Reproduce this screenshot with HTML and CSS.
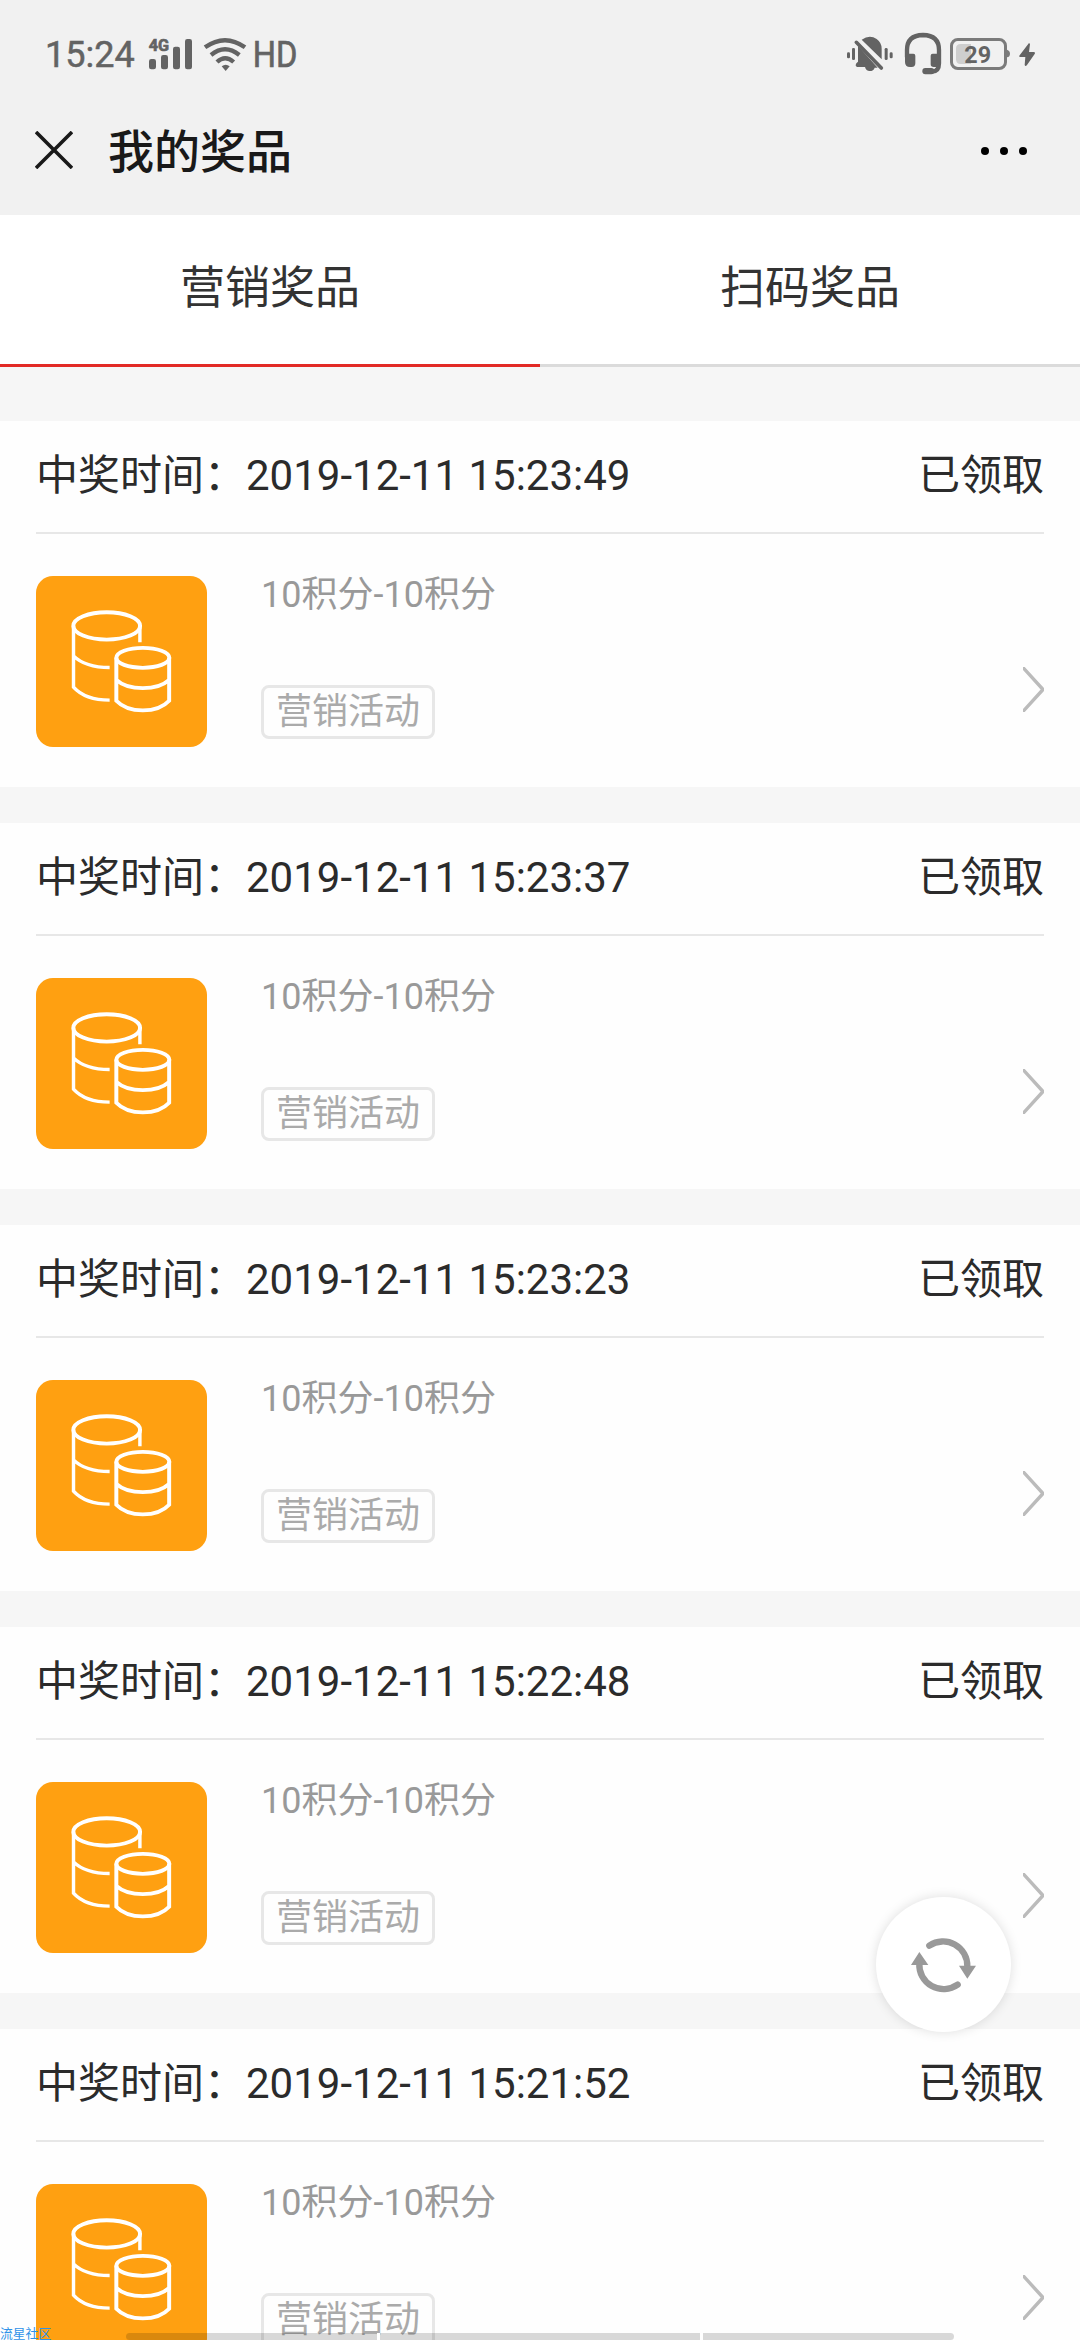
FILE: index.html
```html
<!DOCTYPE html>
<html lang="zh-CN">
<head>
<meta charset="utf-8">
<title>我的奖品</title>
<link rel="stylesheet" href="styles.css">
</head>
<body>
<svg width="0" height="0" class="defs" aria-hidden="true">
  <symbol id="coins" viewBox="105 108 497 514" preserveAspectRatio="none">
    <g fill="none" stroke="#fff" stroke-width="11.500">
      <ellipse cx="310.5" cy="258" rx="97" ry="41"/>
      <path d="M214 258V442Q248 481 319 481M407 258V307M214 348Q248 383 319 383" stroke-width="10"/>
      <ellipse cx="415.500" cy="354" rx="77" ry="30"/>
      <path d="M338.500 354V483Q365 512 415.500 512T492 483V354M338.500 420Q365 445 415.500 445T492 420"/>
    </g>
  </symbol>
  <symbol id="chevron" viewBox="0 0 21 45">
    <path d="M-1 -.5L20 22.500L-1 45.500" fill="none" stroke="#bbb" stroke-width="3.400"/>
  </symbol>
</svg>
<div class="screen">
  <header class="top">
    <div class="status">
      <span class="time">15:24</span>
      <svg class="signal" viewBox="441 90 138 138">
        <text x="446" y="153" textLength="61" lengthAdjust="spacingAndGlyphs" class="net">4G</text>
        <g fill="#636363"><rect x="447" y="177" width="21" height="31" rx="7"/><rect x="483" y="165" width="21" height="43" rx="7"/><rect x="519" y="140" width="21" height="68" rx="7"/><rect x="555" y="117" width="21" height="91" rx="7"/></g>
      </svg>
      <svg class="wifi" viewBox="609 90 132 138">
        <g fill="none" stroke="#636363" stroke-width="13"><path d="M615 142Q675 99 735 142"/><path d="M633 165Q675 131 718 165"/><path d="M651 186Q675 163 701 186"/></g>
        <path d="M665 199Q677 190 689 199L677 213Z" fill="#636363"/>
      </svg>
      <svg class="hd" viewBox="753 90 144 138"><text x="758" y="201" textLength="134" lengthAdjust="spacingAndGlyphs" class="hd-text">HD</text></svg>
      <span class="grow"></span>
      <svg class="bell" viewBox="138 90 144 138">
        <g fill="#636363">
          <path d="M185 119Q209 103 230 117Q245 128 245 146V178ZM174 137L233 203H224Q221 213 209 213Q198 213 195 201H172Q164 200 169 190L174 185Z"/>
          <rect x="141" y="157" width="9" height="18" rx="4"/><rect x="156" y="144" width="9" height="36" rx="4"/><rect x="254" y="144" width="9" height="36" rx="4"/><rect x="269" y="157" width="9" height="18" rx="4"/>
        </g>
        <path d="M169 127L244 204" stroke="#636363" stroke-width="11" stroke-linecap="round"/>
      </svg>
      <svg class="headset" viewBox="309 90 120 138">
        <path d="M321 172V150Q321 106 369 105Q417 106 417 150V190Q417 214 397 215H374" fill="none" stroke="#636363" stroke-width="13"/>
        <g fill="#636363"><path d="M315 161H340Q346 161 346 167V190Q346 201 335 201H330Q315 201 315 186ZM423 161H398Q392 161 392 167V193Q392 201 401 201H408Q423 201 423 186Z"/><rect x="367" y="204" width="36" height="19" rx="9"/></g>
      </svg>
      <svg class="battery" viewBox="447 90 186 138">
        <path d="M487 132H513V192H482Q468 192 468 178V146Q468 132 482 132Z" fill="#cecece"/>
        <rect x="454.500" y="118.500" width="162" height="87" rx="19" fill="none" stroke="#7b7b7b" stroke-width="9"/>
        <path d="M621 149Q630 152 630 161Q630 170 621 172Z" fill="#7b7b7b"/>
        <text x="533" y="188" text-anchor="middle" class="level">29</text>
      </svg>
      <svg class="bolt" viewBox="654 90 54 138"><path d="M687 129L659 166Q655 171 661 171H676L674 195Q676 201 681 195L704 162Q707 156 701 156H687L690 132Z" fill="#636363"/></svg>
    </div>
    <div class="nav">
      <svg class="close" viewBox="0 0 38 38"><path d="M1 1L37 37M37 1L1 37" stroke="#191919" stroke-width="3.600"/></svg>
      <h1 class="title">我的奖品</h1>
      <svg class="more" viewBox="0 0 46 8"><circle cx="4" cy="4" r="4"/><circle cx="23" cy="4" r="4"/><circle cx="42" cy="4" r="4"/></svg>
    </div>
  </header>
  <nav class="tabs">
    <a class="tab tab-active">营销奖品</a>
    <a class="tab">扫码奖品</a>
  </nav>
  <main class="list">
    <section class="card">
      <div class="card-head"><span>中奖时间：2019-12-11 15:23:49</span><span>已领取</span></div>
      <div class="card-body">
        <svg class="prize"><use href="#coins"/></svg>
        <div class="info"><span class="name">10积分-10积分</span><span class="tag">营销活动</span></div>
        <svg class="chevron"><use href="#chevron"/></svg>
      </div>
    </section>
    <section class="card">
      <div class="card-head"><span>中奖时间：2019-12-11 15:23:37</span><span>已领取</span></div>
      <div class="card-body">
        <svg class="prize"><use href="#coins"/></svg>
        <div class="info"><span class="name">10积分-10积分</span><span class="tag">营销活动</span></div>
        <svg class="chevron"><use href="#chevron"/></svg>
      </div>
    </section>
    <section class="card">
      <div class="card-head"><span>中奖时间：2019-12-11 15:23:23</span><span>已领取</span></div>
      <div class="card-body">
        <svg class="prize"><use href="#coins"/></svg>
        <div class="info"><span class="name">10积分-10积分</span><span class="tag">营销活动</span></div>
        <svg class="chevron"><use href="#chevron"/></svg>
      </div>
    </section>
    <section class="card">
      <div class="card-head"><span>中奖时间：2019-12-11 15:22:48</span><span>已领取</span></div>
      <div class="card-body">
        <svg class="prize"><use href="#coins"/></svg>
        <div class="info"><span class="name">10积分-10积分</span><span class="tag">营销活动</span></div>
        <svg class="chevron"><use href="#chevron"/></svg>
      </div>
    </section>
    <section class="card">
      <div class="card-head"><span>中奖时间：2019-12-11 15:21:52</span><span>已领取</span></div>
      <div class="card-body">
        <svg class="prize"><use href="#coins"/></svg>
        <div class="info"><span class="name">10积分-10积分</span><span class="tag">营销活动</span></div>
        <svg class="chevron"><use href="#chevron"/></svg>
      </div>
    </section>
  </main>
  <div class="refresh">
    <svg viewBox="108 109 405 405">
      <g fill="none" stroke="#999" stroke-width="19" stroke-linecap="round"><path d="M268 255A73 73 0 0 1 382 318"/><path d="M238 308A73 73 0 0 0 353 372"/></g>
      <path d="M357 315H408L382 354ZM213 313H265L238 274Z" fill="#999"/>
    </svg>
  </div>
  <div class="gesture"><i></i><i></i><i></i></div>
  <div class="watermark">流星社区</div>
</div>
</body>
</html>
```
FILE: styles.css
```css
* { box-sizing: border-box; }
body { margin: 0; background: #f6f6f6; font-family: Roboto, "Noto Sans CJK SC", sans-serif; color: #2b2b2b; }
svg { display: block; flex: none; }
.defs { position: absolute; }
.screen { position: relative; width: 1080px; height: 2340px; overflow: hidden; }

.top { height: 215px; background: #f1f1f1; }
.status { display: flex; height: 106px; padding: 30px 44px 0 45px; color: #636363; }
.time { width: 102px; font-size: 36px; line-height: 51px; white-space: nowrap; -webkit-text-stroke: .5px #636363; }
.status svg { height: 46px; overflow: visible; }
.signal { width: 46px; }
.wifi { width: 44px; margin-left: 10px; }
.hd { width: 48px; margin-left: 4px; }
.grow { flex: 1; }
.bell { width: 48px; }
.headset { width: 40px; margin-left: 9px; }
.battery { width: 62px; margin-left: 6px; }
.bolt { width: 18px; margin-left: 7px; }
.net { font: 700 48px Roboto, sans-serif; fill: #636363; stroke: #636363; stroke-width: 2px; }
.hd-text { font: 400 108px Roboto, sans-serif; fill: #636363; stroke: #636363; stroke-width: 2px; }
.level { font: 700 70px Roboto, sans-serif; fill: #636363; }

.nav { display: flex; align-items: center; height: 88px; padding: 0 53px 0 35px; }
.close { width: 38px; height: 38px; }
.title { flex: 1; margin: 0 0 0 35px; padding-top: 4px; font-size: 46px; font-weight: 500; line-height: 88px; color: #191919; }
.more { width: 46px; height: 8px; margin-top: 2px; }

.tabs { display: flex; height: 152px; background: #fff; }
.tab { flex: 1; border-bottom: 3px solid #dbdbdb; font-size: 45px; line-height: 147px; text-align: center; color: #333; }
.tab-active { border-color: #e22a26; }

.list { display: flex; flex-direction: column; gap: 36px; padding-top: 54px; }
.card { height: 366px; flex: none; padding: 0 36px; background: #fefefe; }
.card-head { display: flex; justify-content: space-between; height: 113px; border-bottom: 2px solid #e7e7e7; font-size: 42px; line-height: 110px; }
.card-body { display: flex; height: 253px; padding-top: 42px; }
.prize { width: 171px; height: 171px; border-radius: 17px; background: #ffa011; }
.info { flex: 1; display: flex; flex-direction: column; align-items: flex-start; margin-left: 54px; }
.name { height: 109px; font-size: 36px; line-height: 38px; color: #999; }
.tag { height: 54px; padding: 0 12px; border: 3px solid #e7e7e7; border-radius: 8px; font-size: 36px; line-height: 48px; color: #aaa; }
.chevron { width: 21px; height: 45px; margin-top: 91px; }

.refresh { position: absolute; left: 876px; top: 1897px; width: 135px; height: 135px; border-radius: 50%; background: #fff; box-shadow: 0 0 12px rgba(0, 0, 0, .13); }
.gesture { position: absolute; left: 126px; top: 2333px; width: 828px; height: 7px; display: flex; gap: 3px; background: linear-gradient(#fff, #fff) 251px 0 / 3px 7px no-repeat, linear-gradient(#fff, #fff) 574px 0 / 3px 7px no-repeat; }
.gesture i { width: 251px; background: rgba(0, 0, 0, .15); }
.gesture i:first-child { border-radius: 4px 0 0 4px; }
.gesture i:nth-child(2) { width: 320px; }
.gesture i:last-child { border-radius: 0 4px 4px 0; }
.watermark { position: absolute; left: 0; top: 2326px; font-size: 12.8px; line-height: 16px; white-space: nowrap; color: #2f92e8; }
```
